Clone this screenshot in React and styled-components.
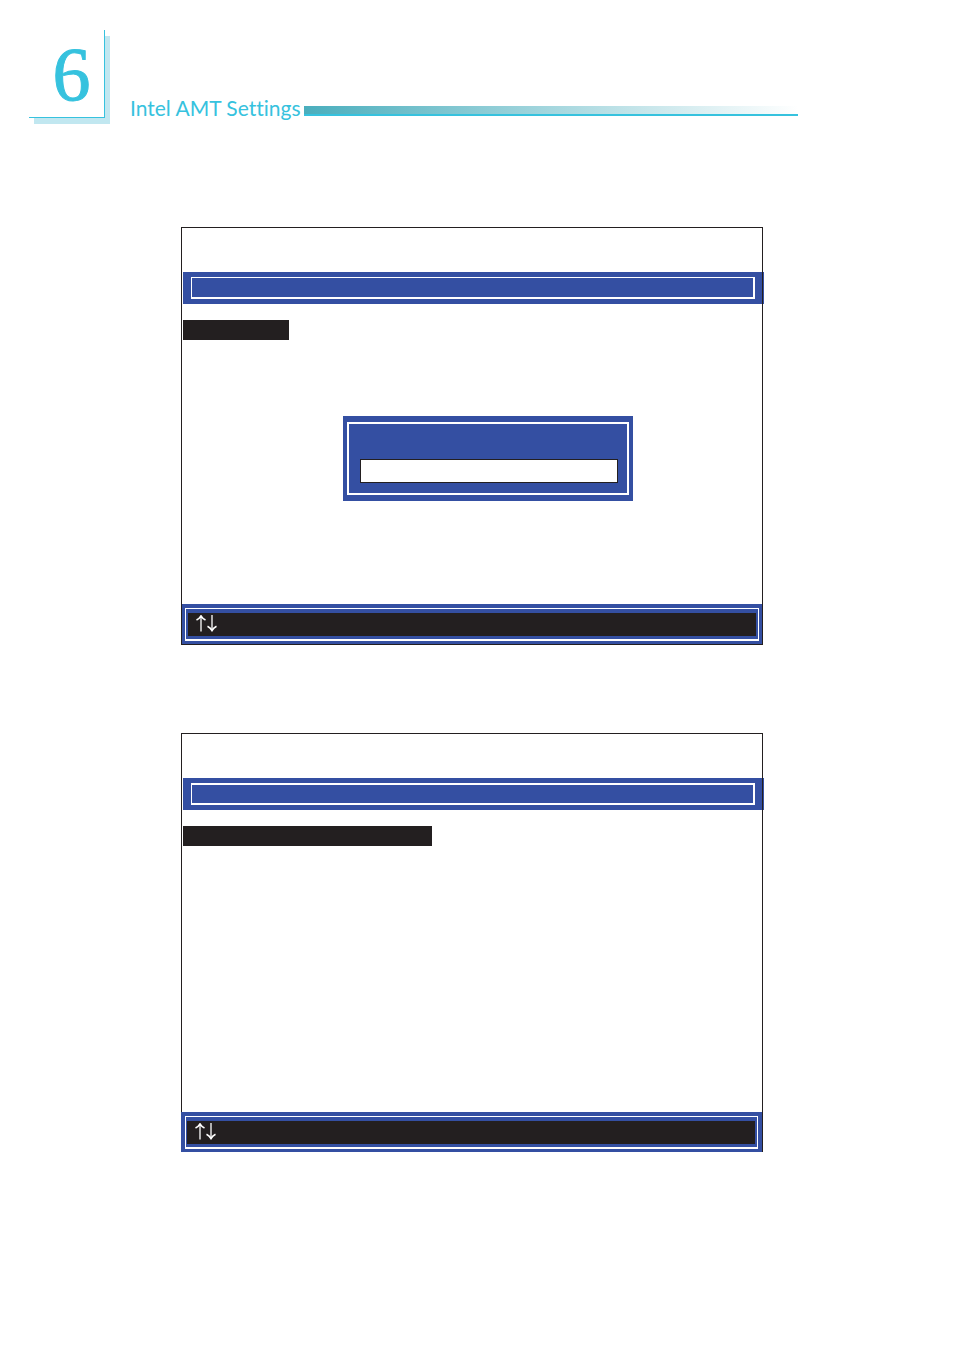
import React from 'react';
import styled, { createGlobalStyle } from 'styled-components';

const GlobalStyle = createGlobalStyle`
:root{
    --cyan: #36c2de;
    --cyan-light: #c1e7f0;
    --blue: #344fa2;
    --dark: #231f20;
    --title-font: Lato, "Open Sans", sans-serif;
    --number-font: "Liberation Serif", serif;
}

*{
    box-sizing: border-box;
}

body{
    margin: 0;
    background: #fff;
}
`

const Arrows = () => {
  return (
    <svg width="22" height="17" viewBox="0 0 22 17" fill="none" stroke="#fff" role="img" aria-label="Up and down">
        <path d="M5 1V16.5" strokeWidth="1.3"/>
        <path d="M0.5 5Q3.5 3.5 5 0.8Q6.5 3.5 9.5 5" strokeWidth="1.6"/>
        <path d="M16 0V15.5" strokeWidth="1.3"/>
        <path d="M11.5 11.3Q14.5 12.8 16 15.5Q17.5 12.8 20.5 11.3" strokeWidth="1.6"/>
    </svg>
  )
}

const BiosScreen = ({ selected, bodyHeight, raised, thickTop, children }) => {
  return (
    <Screen>
        <TitleBar>
            <TitleLine $thickTop={thickTop}/>
        </TitleBar>
        <Body $height={bodyHeight}>
            <SelectedRow $width={selected}/>
            {children}
        </Body>
        <KeyBar $raised={raised}>
            <KeyLine $raised={raised}>
                <Keys><Arrows/></Keys>
            </KeyLine>
        </KeyBar>
    </Screen>
  )
}

const App = () => {
  return (
    <>
        <GlobalStyle/>
        <Header>
            <Chapter>6</Chapter>
            <Title>Intel AMT Settings</Title>
            <Rule/>
        </Header>
        <Content>
            <BiosScreen selected="106px" bodyHeight="300px">
                <DialogArea>
                    <Dialog>
                        <DialogLine>
                            <PasswordInput type="text" aria-label="Password"/>
                        </DialogLine>
                    </Dialog>
                </DialogArea>
            </BiosScreen>
            <BiosScreen selected="249px" bodyHeight="302px" raised thickTop/>
        </Content>
    </>
  )
}

export default App

const Header = styled.header`
display: flex;
align-items: flex-end;
padding: 30px 156px 0 29px;
`

const Chapter = styled.div`
width: 76px;
height: 88px;
flex: none;
display: flex;
justify-content: center;
align-items: center;
padding-left: 10px;
background: #fff;
border-right: 1px solid var(--cyan);
border-bottom: 1px solid var(--cyan);
box-shadow: 5px 6px 0 var(--cyan-light);
color: var(--cyan);
font-family: var(--number-font);
font-size: 76px;
line-height: 80px;
-webkit-text-stroke: 1px var(--cyan);
`

const Title = styled.h1`
margin: 0 3px 0 25px;
flex: none;
color: var(--cyan);
font-family: var(--title-font);
font-size: 21px;
font-weight: 400;
font-variant-ligatures: none;
line-height: 20px;
white-space: nowrap;
`

const Rule = styled.div`
flex: 1;
height: 10px;
margin-bottom: 2px;
border-bottom: 2px solid var(--cyan);
background: linear-gradient(to right, #4aaebd, #fff);
`

const Content = styled.main`
display: flex;
flex-direction: column;
gap: 88px;
padding: 109px 191px 198px 181px;
`

const Screen = styled.section`
position: relative;
padding: 45px 1px 1px;

    /* the frame runs over the title bar */
    &::after{
    content: '';
    position: absolute;
    inset: 0;
    border: 1px solid var(--dark);
    pointer-events: none;
    }
`

const TitleBar = styled.div`
height: 32px;
margin: 0 -2px 0 1px;
padding: 5px 9px 5px 8px;
background: var(--blue);
`

const TitleLine = styled.div`
height: 22px;
border: solid #fff;
border-width: ${({ $thickTop }) => ($thickTop ? '2px 2px 2px 1px' : '1px 2px 2px 1px')};
`

const Body = styled.div`
min-height: ${({ $height }) => $height};
padding: 16px 0 0 1px;
`

const SelectedRow = styled.div`
width: ${({ $width }) => $width};
height: 20px;
background: var(--dark);
`

const DialogArea = styled.div`
display: flex;
justify-content: center;
padding: 76px 0 0 31px;
`

const Dialog = styled.form`
width: 290px;
padding: 6px 4px;
background: var(--blue);
`

const DialogLine = styled.div`
padding: 35px 9px 10px 11px;
border: 2px solid #fff;
`

const PasswordInput = styled.input`
display: block;
width: 100%;
height: 24px;
padding: 0 6px;
border: 1px solid var(--dark);
border-radius: 0;
background: #fff;
outline: none;
`

const KeyBar = styled.div`
position: relative;
z-index: ${({ $raised }) => ($raised ? 1 : 0)};
margin: ${({ $raised }) => ($raised ? '0 0 -1px -1px' : '0')};
padding: ${({ $raised }) => ($raised ? '4px 4px 3px' : '4px 3px 3px')};
background: var(--blue);
`

const KeyLine = styled.div`
padding: ${({ $raised }) => ($raised ? '4px 2px 3px 1px' : '4px 2px 3px')};
border: solid #fff;
border-width: 1px 1px 2px;
`

const Keys = styled.div`
display: flex;
height: 23px;
padding: 2px 8px;
background: var(--dark);
`
